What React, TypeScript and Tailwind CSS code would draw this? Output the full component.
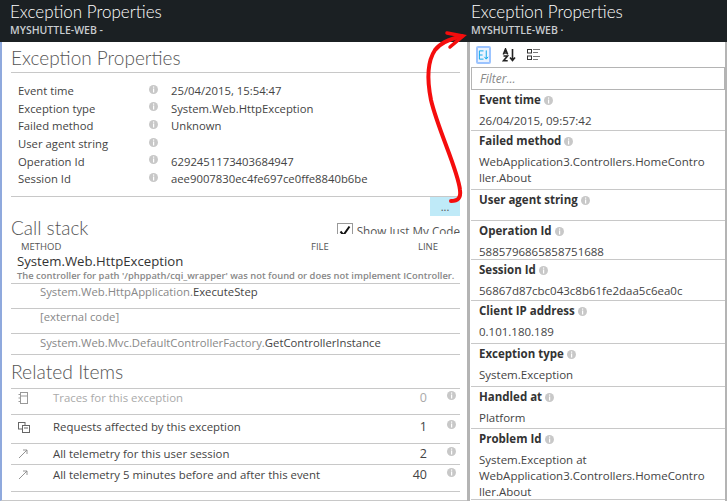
const HEADING = "font-['Lato','Open_Sans',sans-serif] font-light";

function InfoDot({ className = "" }: { className?: string }) {
  return (
    <svg viewBox="0 0 9 9" className={"h-[9px] w-[9px] shrink-0 " + className}>
      <circle cx="4.5" cy="4.5" r="4.5" fill="#c8c8c8" />
      <rect x="4" y="1.5" width="1.2" height="1.2" fill="#fff" />
      <rect x="4" y="3.5" width="1.2" height="4" fill="#fff" />
    </svg>
  );
}

function BladeHeader({ sub }: { sub: string }) {
  return (
    <div className="h-[42px] shrink-0 bg-[#1b2023]">
      <div className={"text-[17px] leading-[23px] text-white " + HEADING}>Exception Properties</div>
      <div className="mt-[1px] text-[10.5px] leading-[12px] font-semibold text-[#c8ccd0]">{sub}</div>
    </div>
  );
}

const PROPS: [string, string][] = [
  ["Event time", "25/04/2015, 15:54:47"],
  ["Exception type", "System.Web.HttpException"],
  ["Failed method", "Unknown"],
  ["User agent string", ""],
  ["Operation Id", "6292451173403684947"],
  ["Session Id", "aee9007830ec4fe697ce0ffe8840b6be"],
];

const RELATED = [
  { label: "Traces for this exception", count: "0", h: "h-[26px]", icon: "doc", dim: true, pt: "pt-[1px]" },
  { label: "Requests affected by this exception", count: "1", h: "h-[29px]", icon: "copy", dim: false, pt: "pt-[4px]" },
  { label: "All telemetry for this user session", count: "2", h: "h-[21px]", icon: "arrow", dim: false, pt: "pt-[2px]" },
  { label: "All telemetry 5 minutes before and after this event", count: "40", h: "h-[27px]", icon: "arrow", dim: false, pt: "pt-[2px]" },
];

function RelatedIcon({ kind }: { kind: string }) {
  if (kind === "doc") {
    return (
      <svg viewBox="0 0 10 12" className="h-[12px] w-[10px]" fill="none" stroke="#999">
        <rect x="2.5" y="0.5" width="7" height="11" />
        <path d="M0.5 2.5h2M0.5 6h2M0.5 9.5h2M2.5 4h7" />
      </svg>
    );
  }
  if (kind === "copy") {
    return (
      <svg viewBox="0 0 12 11" className="h-[11px] w-[12px]" fill="none" stroke="#666">
        <rect x="0.5" y="0.5" width="6.5" height="6.5" />
        <rect x="4.5" y="3.5" width="7" height="7" fill="#fff" />
        <path d="M6 6h4" />
      </svg>
    );
  }
  return (
    <svg viewBox="0 0 10 10" className="h-[10px] w-[10px]" fill="none" stroke="#888" strokeWidth="0.9">
      <path d="M1 9 9 1M5 1H9V5" />
    </svg>
  );
}

function LeftBlade() {
  return (
    <div className="flex w-[467px] shrink-0 flex-col">
      <div className="bg-[#1b2023] pl-[10px]">
        <BladeHeader sub="MYSHUTTLE-WEB -" />
      </div>
      <div className="flex-1 border-b border-l-2 border-[#c8c8c8] border-l-[#8fa9dd] pl-[9px] pr-[7px]">
        <div className={"flex h-[30px] items-center text-[19px] leading-none text-[#555] " + HEADING}>Exception Properties</div>
        <div className="h-px bg-[#c8c8c8]" />
        <div className="h-[123px] pt-[9px] text-[11.3px] text-[#444]">
          {PROPS.map(([k, v]) => (
            <div key={k} className="flex h-[17.6px] items-center pl-[7px] leading-none">
              <span className="w-[131px]">{k}</span>
              <InfoDot className="mb-[3px]" />
              <span className="ml-[13px]">{v}</span>
            </div>
          ))}
        </div>
        <div className="h-px bg-[#c8c8c8]" />
        <div className="flex justify-end">
          <div className="flex h-[19px] w-[30px] items-center justify-center bg-[#bfeaf8] text-[11px] leading-none text-[#555]">...</div>
        </div>
        <div className="flex h-[24px] items-start justify-between">
          <span className={"mt-[2px] text-[19px] leading-[20px] text-[#555] " + HEADING}>Call stack</span>
          <span className="mt-[7px] flex h-[11px] items-start gap-[4px] overflow-hidden text-[11.7px] leading-[16px] text-[#555]">
            <span className="flex h-[16px] w-[16px] shrink-0 items-center justify-center border border-[#999]">
              <svg viewBox="0 0 14 14" className="h-[14px] w-[14px]" fill="none" stroke="#111" strokeWidth="2">
                <path d="M2.5 7.5 5.5 11 11.5 2.5" />
              </svg>
            </span>
            Show Just My Code
          </span>
        </div>
        <div className="flex h-[13px] items-center text-[9.5px] leading-none text-[#555]">
          <span className="ml-[10px] w-[290px]">METHOD</span>
          <span className="w-[107px]">FILE</span>
          <span>LINE</span>
        </div>
        <div className="pl-[6px] text-[13.2px] leading-[16px] text-[#333]">System.Web.HttpException</div>
        <div className="h-[14px] pl-[6px] text-[9.4px] leading-[13px] font-semibold whitespace-nowrap text-[#888]">
          The controller for path '/phppath/cqi_wrapper' was not found or does not implement IController.
        </div>
        <div className="h-px bg-[#c8c8c8]" />
        <div className="h-[25px] border-b border-[#c8c8c8] pl-[29px] text-[11.3px] leading-[15px] text-[#888]">
          System.Web.HttpApplication.<span className="text-[#444]">ExecuteStep</span>
        </div>
        <div className="h-[25px] border-b border-[#c8c8c8] pl-[29px] text-[11.3px] leading-[15px] text-[#888]">[external code]</div>
        <div className="h-[21px] border-b border-[#c8c8c8] pl-[29px] text-[11.3px] leading-[18px] text-[#888]">
          System.Web.Mvc.DefaultControllerFactory.<span className="text-[#444]">GetControllerInstance</span>
        </div>
        <div className={"flex h-[33px] items-center text-[19.3px] leading-none text-[#555] " + HEADING}>Related Items</div>
        <div className="h-px bg-[#c8c8c8]" />
        {RELATED.map((row) => (
          <div
            key={row.label}
            className={"flex items-start border-b border-[#c8c8c8] text-[11.4px] leading-[16px] " + row.h + " " + row.pt + " " + (row.dim ? "text-[#aaa]" : "text-[#444]")}
          >
            <span className="flex h-[16px] w-[42px] items-center pl-[7px]">
              <RelatedIcon kind={row.icon} />
            </span>
            <span className="flex-1">{row.label}</span>
            <span className="mr-[20px] w-[20px] text-right text-[12.5px]">{row.count}</span>
            <InfoDot className="mt-[1px] mr-[4px]" />
          </div>
        ))}
      </div>
    </div>
  );
}

const RIGHT_ROWS: { k: string; v: string[]; h: string }[] = [
  { k: "Event time", v: ["26/04/2015, 09:57:42"], h: "h-[41px]" },
  { k: "Failed method", v: ["WebApplication3.Controllers.HomeContro", "ller.About"], h: "h-[59px]" },
  { k: "User agent string", v: [], h: "h-[31px]" },
  { k: "Operation Id", v: ["5885796865858751688"], h: "h-[39px]" },
  { k: "Session Id", v: ["56867d87cbc043c8b61fe2daa5c6ea0c"], h: "h-[41px]" },
  { k: "Client IP address", v: ["0.101.180.189"], h: "h-[43px]" },
  { k: "Exception type", v: ["System.Exception"], h: "h-[43px]" },
  { k: "Handled at", v: ["Platform"], h: "h-[42px]" },
  { k: "Problem Id", v: ["System.Exception at", "WebApplication3.Controllers.HomeContro", "ller.About"], h: "h-[71px]" },
];

function RightBlade() {
  return (
    <div className="flex min-w-0 flex-1 flex-col">
      <div className="bg-[#1b2023] pl-[1px]">
        <BladeHeader sub="MYSHUTTLE-WEB ·" />
      </div>
      <div className="flex flex-1 flex-col overflow-hidden border-r-2 border-[#b4b4b4] pl-[1px]">
        <div className="flex h-[25px] shrink-0 items-center gap-[11px] pl-[5px]">
          <span className="flex h-[18px] w-[15px] items-center justify-center rounded-[2px] border-2 border-[#9cc4ff] bg-[#eaf3ff]">
            <svg viewBox="0 0 12 12" className="h-[12px] w-[12px]" fill="none" stroke="#00a4e8">
              <path d="M6 1.5H1.5v9H6M1.5 6H5" />
              <path d="M9 1v9M7 8l2 2.5L11 8" />
            </svg>
          </span>
          <svg viewBox="0 0 14 14" className="h-[14px] w-[14px]" fill="none" stroke="#222" strokeWidth="1.6">
            <path d="M1.3 6.5 3.5 1l2.2 5.5M2 5h3M1.5 8h4L1.5 12.8h4.2M10.5 1v11M8 9.5l2.5 3 2.5-3" />
          </svg>
          <svg viewBox="0 0 13 13" className="h-[13px] w-[13px]" fill="none" stroke="#333">
            <rect x="0.5" y="1.5" width="4" height="3.5" />
            <rect x="0.5" y="8" width="4" height="3.5" />
            <path d="M6 1.5h7M6 4.5h5M6 8.5h7M6 11.5h5" stroke="#777" />
          </svg>
        </div>
        <div className="h-[23px] shrink-0 border border-[#b4b4b4] pl-[8px] text-[12px] leading-[21px] text-[#888] italic">Filter...</div>
        {RIGHT_ROWS.map((row) => (
          <div key={row.k} className={"shrink-0 border-b border-[#c8c8c8] pl-[8px] text-[11.5px] " + row.h}>
            <div className="flex h-[20px] items-center gap-[3px] font-bold text-[#333]">
              {row.k}
              <InfoDot />
            </div>
            <div className="pt-[3px] leading-[16px] text-[#444]">
              {row.v.map((line) => (
                <div key={line}>{line}</div>
              ))}
            </div>
          </div>
        ))}
      </div>
    </div>
  );
}

export default function App() {
  return (
    <div className="relative flex h-[501px] w-[727px] overflow-hidden bg-white font-['Open_Sans','Noto_Sans',sans-serif]">
      <LeftBlade />
      <div className="flex w-[3px] shrink-0 flex-col">
        <div className="h-[42px] bg-[#1b2023]" />
        <div className="flex-1 bg-[#b4b4b4]" />
      </div>
      <RightBlade />
      <svg viewBox="0 0 727 501" className="pointer-events-none absolute inset-0 h-[501px] w-[727px]" fill="none" stroke="#f50d0d" strokeWidth="4" strokeLinecap="round">
        <path d="M451 201C458 201 461 198 460 190C458 170 438 130 431 100C427 80 427 62 435 50C440 43 450 39 462 36" />
        <path d="M447 33 463 36 450 47" strokeWidth="3.5" />
      </svg>
    </div>
  );
}
